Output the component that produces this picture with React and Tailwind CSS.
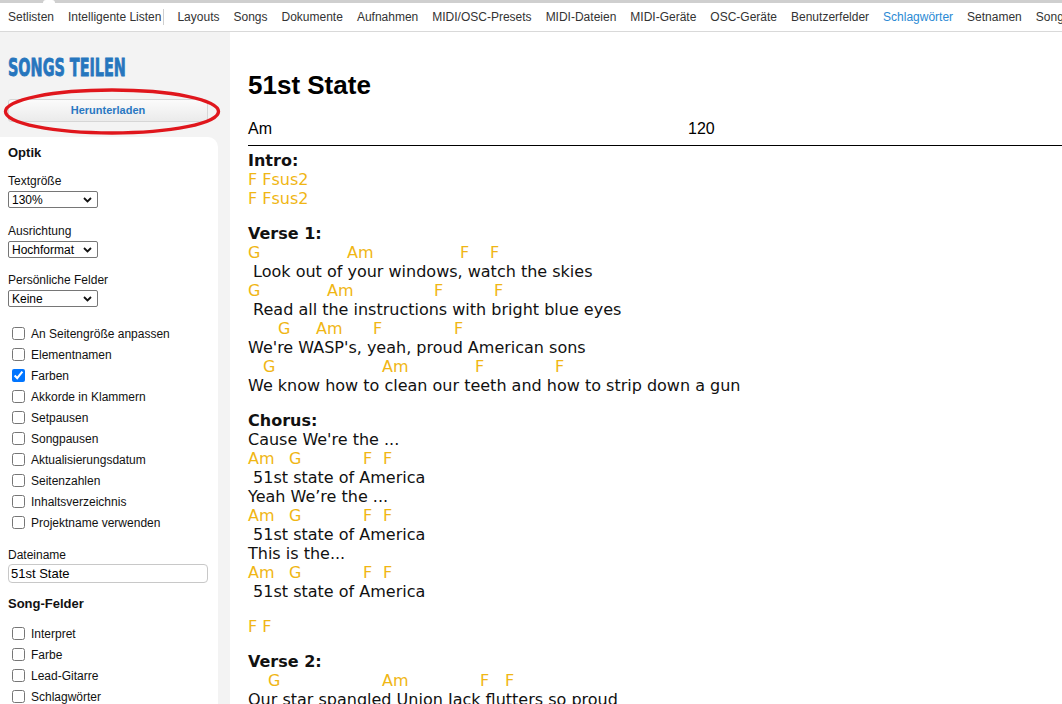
import React from "react";

const NAV = [
  "Setlisten",
  "Intelligente Listen",
  "|",
  "Layouts",
  "Songs",
  "Dokumente",
  "Aufnahmen",
  "MIDI/OSC-Presets",
  "MIDI-Dateien",
  "MIDI-Geräte",
  "OSC-Geräte",
  "Benutzerfelder",
  "Schlagwörter",
  "Setnamen",
  "Songs",
];

function Select({ value }) {
  return (
    <div className="w-[90px] h-[17px] border border-[#767676] rounded-[2px] bg-white flex items-center justify-between pl-[3px] pr-[5px] text-[12px] leading-none text-black">
      <span>{value}</span>
      <svg width="9" height="6" viewBox="0 0 9 6">
        <path d="M1 1 L4.5 4.5 L8 1" fill="none" stroke="#111" strokeWidth="1.8" />
      </svg>
    </div>
  );
}

function Check({ label, checked }) {
  return (
    <label className="h-[21px] flex items-center gap-[6px] text-[12px] text-[#111]">
      <input type="checkbox" defaultChecked={checked} className="w-[13px] h-[13px] m-0" />
      <span>{label}</span>
    </label>
  );
}

function ChordLine({ items }) {
  const first = items[0][0];
  return (
    <div className="h-[19px] flex whitespace-pre text-[#f0b614]">
      {first > 0 && <span className="inline-block shrink-0" style={{ width: first }} />}
      {items.map(([x, c], i) => {
        const next = items[i + 1];
        return (
          <span key={i} className="inline-block shrink-0" style={next ? { width: next[0] - x } : undefined}>
            {c}
          </span>
        );
      })}
    </div>
  );
}

function Lyric({ children }) {
  return <div className="h-[19px] whitespace-pre text-[#111]">{children}</div>;
}

function Head({ children }) {
  return <div className="h-[19px] font-bold text-[#111]">{children}</div>;
}

const CHORUS_CHORDS = [
  [0, "Am"],
  [41, "G"],
  [115, "F"],
  [135, "F"],
];

export default function App() {
  return (
    <div className="h-[704px] w-full overflow-hidden flex flex-col bg-white font-['Liberation_Sans',Arial,sans-serif]">
      <div className="h-[3px] bg-[#cfcfcf] relative shrink-0">
        <div className="absolute left-[43px] top-0 w-[12px] h-[3px] bg-white rounded-t-full" />
      </div>
      <nav className="h-[29px] shrink-0 border-b border-[#d9d9d9] flex items-center gap-[14px] pl-[8px] text-[12px] text-[#333] whitespace-nowrap overflow-hidden">
        {NAV.map((n, i) =>
          n === "|" ? (
            <span key={i} className="w-px h-[16px] bg-[#cfcfcf] -ml-[12px] -mr-[1px] shrink-0" />
          ) : (
            <span key={i} className={n === "Schlagwörter" ? "text-[#2a8ad4]" : ""}>
              {n}
            </span>
          )
        )}
      </nav>
      <div className="flex flex-1 min-h-0">
        <aside className="w-[230px] shrink-0 bg-[#f3f3f3] pt-[23px] relative">
          <div className="ml-[8px] h-[25px] leading-[25px] text-[25px] font-bold text-[#2676be] font-['Liberation_Sans_Narrow','DejaVu_Sans_Condensed',sans-serif] origin-left scale-x-[0.64] [-webkit-text-stroke:0.8px_#2676be] whitespace-nowrap">
            SONGS TEILEN
          </div>
          <div className="px-[8px] mt-[19px] w-[216px]">
            <div className="h-[23px] w-[200px] rounded-[3px] border border-[#d6d6d6] bg-gradient-to-b from-[#fbfbfb] to-[#ebebeb] flex items-center justify-center text-[11px] font-bold text-[#2a78c2]">
              Herunterladen
            </div>
          </div>
          <svg className="absolute left-[3px] top-[55px] pointer-events-none" width="218" height="50" viewBox="0 0 218 50">
            <ellipse cx="109" cy="24.5" rx="106.5" ry="21.5" fill="none" stroke="#e0161c" strokeWidth="3.4" />
          </svg>
          <div className="mt-[15px] w-[218px] bg-white rounded-tr-[10px] pt-[8px] pl-[8px] h-[600px]">
            <div className="h-[16px] leading-[16px] text-[13px] font-bold text-[#111]">Optik</div>
            <div className="mt-[13px] h-[14px] leading-[14px] text-[12px] text-[#111]">Textgröße</div>
            <div className="mt-[3px]">
              <Select value="130%" />
            </div>
            <div className="mt-[16px] h-[14px] leading-[14px] text-[12px] text-[#111]">Ausrichtung</div>
            <div className="mt-[3px]">
              <Select value="Hochformat" />
            </div>
            <div className="mt-[15px] h-[14px] leading-[14px] text-[12px] text-[#111]">Persönliche Felder</div>
            <div className="mt-[3px]">
              <Select value="Keine" />
            </div>
            <div className="mt-[16px] pl-[4px]">
              <Check label="An Seitengröße anpassen" />
              <Check label="Elementnamen" />
              <Check label="Farben" checked />
              <Check label="Akkorde in Klammern" />
              <Check label="Setpausen" />
              <Check label="Songpausen" />
              <Check label="Aktualisierungsdatum" />
              <Check label="Seitenzahlen" />
              <Check label="Inhaltsverzeichnis" />
              <Check label="Projektname verwenden" />
            </div>
            <div className="mt-[15px] h-[14px] leading-[14px] text-[12px] text-[#111]">Dateiname</div>
            <div className="mt-[2px] w-[200px] h-[19px] border border-[#c8c8c8] rounded-[4px] bg-white flex items-center pl-[2px] text-[13px] text-black">
              51st State
            </div>
            <div className="mt-[13px] h-[16px] leading-[16px] text-[13px] font-bold text-[#111]">Song-Felder</div>
            <div className="mt-[11px] pl-[4px]">
              <Check label="Interpret" />
              <Check label="Farbe" />
              <Check label="Lead-Gitarre" />
              <Check label="Schlagwörter" />
              <Check label="Tonart" />
            </div>
          </div>
        </aside>
        <main className="flex-1 min-w-0 pl-[18px] pt-[38px] overflow-hidden">
          <div className="w-[900px]">
            <h1 className="h-[30px] leading-[30px] text-[26px] font-bold text-black">51st State</h1>
            <div className="mt-[20px] pb-[7px] border-b border-black flex text-[16px] leading-[18px] text-black">
              <span className="w-[440px]">Am</span>
              <span>120</span>
            </div>
            <div className="mt-[5px] text-[16px] leading-[19px] font-['DejaVu_Sans',sans-serif]">
              <section className="mb-[16px]">
                <Head>Intro:</Head>
                <ChordLine items={[[0, "F Fsus2"]]} />
                <ChordLine items={[[0, "F Fsus2"]]} />
              </section>
              <section className="mb-[16px]">
                <Head>Verse 1:</Head>
                <ChordLine items={[[0, "G"], [99, "Am"], [212, "F"], [242, "F"]]} />
                <Lyric> Look out of your windows, watch the skies</Lyric>
                <ChordLine items={[[0, "G"], [79, "Am"], [186, "F"], [246, "F"]]} />
                <Lyric> Read all the instructions with bright blue eyes</Lyric>
                <ChordLine items={[[30, "G"], [68, "Am"], [125, "F"], [206, "F"]]} />
                <Lyric>We're WASP's, yeah, proud American sons</Lyric>
                <ChordLine items={[[15, "G"], [134, "Am"], [227, "F"], [307, "F"]]} />
                <Lyric>We know how to clean our teeth and how to strip down a gun</Lyric>
              </section>
              <section className="mb-[16px]">
                <Head>Chorus:</Head>
                <Lyric>Cause We're the ...</Lyric>
                <ChordLine items={CHORUS_CHORDS} />
                <Lyric> 51st state of America</Lyric>
                <Lyric>Yeah We’re the ...</Lyric>
                <ChordLine items={CHORUS_CHORDS} />
                <Lyric> 51st state of America</Lyric>
                <Lyric>This is the...</Lyric>
                <ChordLine items={CHORUS_CHORDS} />
                <Lyric> 51st state of America</Lyric>
              </section>
              <section className="mb-[16px]">
                <ChordLine items={[[0, "F F"]]} />
              </section>
              <section className="mb-[16px]">
                <Head>Verse 2:</Head>
                <ChordLine items={[[20, "G"], [134, "Am"], [232, "F"], [257, "F"]]} />
                <Lyric>Our star spangled Union Jack flutters so proud</Lyric>
              </section>
            </div>
          </div>
        </main>
      </div>
    </div>
  );
}
